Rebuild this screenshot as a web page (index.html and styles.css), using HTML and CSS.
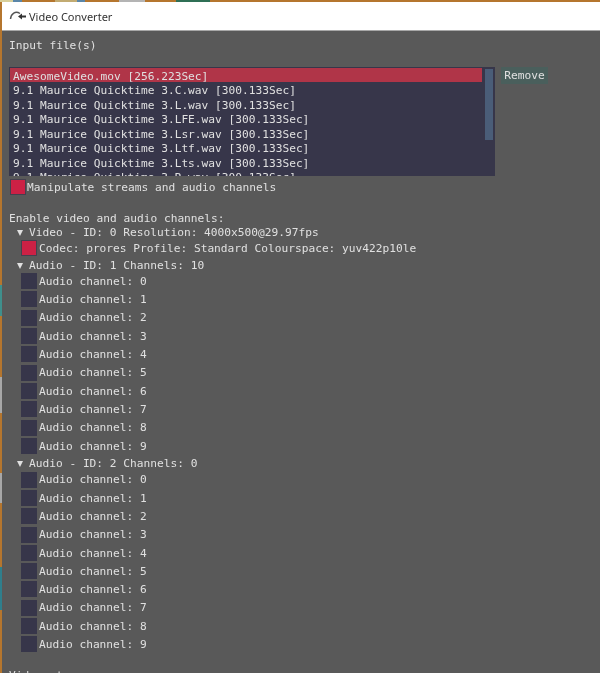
FILE: index.html
```html
<!DOCTYPE html>
<html lang="en">

<head>
    <meta charset="UTF-8">
    <title>Video Converter</title>
    <link rel="stylesheet" href="styles.css">
</head>

<body>
    <div class="window">
        <div class="titlebar">
            <svg class="app-icon" width="17" height="12" viewBox="0 0 17 12">
                <path d="M1.5 9 C2 3.5 6.5 0.5 11 3.5" fill="none" stroke="#555" stroke-width="1.5"></path>
                <path d="M9 6.5 L13 3.5 L13 5.5 L17 5.5 L17 7.5 L13 7.5 L13 9.5 Z" fill="#333"></path>
            </svg>
            <span>Video Converter</span>
        </div>

        <div class="content">
            <div class="line">Input file(s)</div>

            <div class="file-section">
                <div class="file-list">
                    <div class="file-rows">
                        <div class="file selected">AwesomeVideo.mov [256.223Sec]</div>
                        <div class="file">9.1 Maurice Quicktime 3.C.wav [300.133Sec]</div>
                        <div class="file">9.1 Maurice Quicktime 3.L.wav [300.133Sec]</div>
                        <div class="file">9.1 Maurice Quicktime 3.LFE.wav [300.133Sec]</div>
                        <div class="file">9.1 Maurice Quicktime 3.Lsr.wav [300.133Sec]</div>
                        <div class="file">9.1 Maurice Quicktime 3.Ltf.wav [300.133Sec]</div>
                        <div class="file">9.1 Maurice Quicktime 3.Lts.wav [300.133Sec]</div>
                        <div class="file">9.1 Maurice Quicktime 3.R.wav [300.133Sec]</div>
                    </div>
                    <div class="scrollbar"><div class="scroll-thumb"></div></div>
                </div>
                <button class="remove" type="button">Remove</button>
            </div>

            <div class="check-row manipulate">
                <span class="box on"></span>
                <span class="label">Manipulate streams and audio channels</span>
            </div>

            <div class="line enable">Enable video and audio channels:</div>

            <div class="line tree"><span class="arrow"></span>Video - ID: 0 Resolution: 4000x500@29.97fps</div>
            <div class="check-row codec">
                <span class="box on"></span>
                <span class="label">Codec: prores Profile: Standard Colourspace: yuv422p10le</span>
            </div>

            <div class="line tree audio"><span class="arrow"></span>Audio - ID: 1 Channels: 10</div>
            <div class="check-row channel"><span class="box"></span><span class="label">Audio channel: 0</span></div>
            <div class="check-row channel"><span class="box"></span><span class="label">Audio channel: 1</span></div>
            <div class="check-row channel"><span class="box"></span><span class="label">Audio channel: 2</span></div>
            <div class="check-row channel"><span class="box"></span><span class="label">Audio channel: 3</span></div>
            <div class="check-row channel"><span class="box"></span><span class="label">Audio channel: 4</span></div>
            <div class="check-row channel"><span class="box"></span><span class="label">Audio channel: 5</span></div>
            <div class="check-row channel"><span class="box"></span><span class="label">Audio channel: 6</span></div>
            <div class="check-row channel"><span class="box"></span><span class="label">Audio channel: 7</span></div>
            <div class="check-row channel"><span class="box"></span><span class="label">Audio channel: 8</span></div>
            <div class="check-row channel"><span class="box"></span><span class="label">Audio channel: 9</span></div>

            <div class="line tree audio"><span class="arrow"></span>Audio - ID: 2 Channels: 0</div>
            <div class="check-row channel"><span class="box"></span><span class="label">Audio channel: 0</span></div>
            <div class="check-row channel"><span class="box"></span><span class="label">Audio channel: 1</span></div>
            <div class="check-row channel"><span class="box"></span><span class="label">Audio channel: 2</span></div>
            <div class="check-row channel"><span class="box"></span><span class="label">Audio channel: 3</span></div>
            <div class="check-row channel"><span class="box"></span><span class="label">Audio channel: 4</span></div>
            <div class="check-row channel"><span class="box"></span><span class="label">Audio channel: 5</span></div>
            <div class="check-row channel"><span class="box"></span><span class="label">Audio channel: 6</span></div>
            <div class="check-row channel"><span class="box"></span><span class="label">Audio channel: 7</span></div>
            <div class="check-row channel"><span class="box"></span><span class="label">Audio channel: 8</span></div>
            <div class="check-row channel"><span class="box"></span><span class="label">Audio channel: 9</span></div>

            <div class="line streams">Video streams:</div>
        </div>
    </div>
</body>

</html>
```

FILE: styles.css
```css
html,
body {
    margin: 0;
    height: 100%;
    overflow: hidden;
}

/* desktop showing behind the window, a thin strip on top and on the left */
body {
    padding: 2px 0 0 2px;
    box-sizing: border-box;
    background-color: #b5762e;
    background-image:
        linear-gradient(90deg, #d8cf9a 0 13px, #5a86a8 13px 22px, #b5762e 22px 55px, #c2ab72 55px 77px, #5a86a8 77px 85px, #b5762e 85px 119px, #b4b4b4 119px 145px, #b5762e 145px 176px, #2f6f55 176px 210px, #b5762e 210px),
        linear-gradient(#b5762e 0 285px, #3f8f8c 285px 316px, #b5762e 316px 377px, #a8a8a8 377px 413px, #b5762e 413px 473px, #a8a8a8 473px 503px, #b5762e 503px 567px, #2f7f8c 567px 610px, #b5762e 610px);
    background-size: 100% 2px, 2px 100%;
    background-repeat: no-repeat;
}

.window {
    height: 100%;
    display: flex;
    flex-direction: column;
    background-color: #595959;
    filter: blur(0.35px);
}

.titlebar {
    height: 29px;
    flex-shrink: 0;
    box-sizing: border-box;
    display: flex;
    align-items: center;
    gap: 3px;
    padding-left: 7px;
    background-color: #fff;
    border-bottom: 1px solid #a8a8a8;
    font-family: "Noto Sans", sans-serif;
    font-size: 11px;
    color: #333;
}

.app-icon {
    flex-shrink: 0;
}

.content {
    flex: 1;
    overflow: hidden;
    padding: 7px 0 0 7px;
    font-family: "DejaVu Sans Mono", monospace;
    font-size: 11.2px;
    line-height: 16.5px;
    color: #e0e0e0;
    white-space: nowrap;
}

.line {
    height: 14.5px;
}

.file-section {
    display: flex;
    align-items: flex-start;
    gap: 6px;
    margin-top: 14px;
}

.file-list {
    width: 486px;
    height: 109px;
    box-sizing: border-box;
    display: flex;
    justify-content: space-between;
    overflow: hidden;
    padding: 1px;
    background-color: #37364a;
}

.file-rows {
    width: 472px;
}

.file {
    height: 14.5px;
    padding-left: 3px;
    line-height: 18.5px;
}

.file.selected {
    background-color: #b03548;
}

.scrollbar {
    width: 8px;
    margin-right: 1px;
    background-color: #37364a;
}

.scroll-thumb {
    width: 100%;
    height: 71px;
    margin-top: 1px;
    background-color: #4a5d78;
}

.remove {
    height: 17px;
    width: 47px;
    padding: 1px 0 0;
    border: none;
    background-color: #4a5f5c;
    color: #e0e0e0;
    font: inherit;
    line-height: 16px;
}

.check-row {
    display: flex;
    align-items: center;
    gap: 2px;
}

.label {
    padding-top: 2px;
    line-height: 14.5px;
}

.box {
    width: 16px;
    height: 16px;
    flex-shrink: 0;
    box-sizing: border-box;
    background-color: #37364a;
}

.box.on {
    border: 1px solid #45404f;
    background-color: #cc2145;
}

.manipulate {
    height: 17px;
    margin-top: 3px;
    margin-left: 1px;
    gap: 1px;
}

.enable {
    margin-top: 15px;
}

.tree {
    display: flex;
    align-items: flex-start;
    padding-left: 7px;
}

.arrow {
    width: 0;
    height: 0;
    margin: 5px 6px 0 1px;
    border-left: 3.5px solid transparent;
    border-right: 3.5px solid transparent;
    border-top: 6px solid #e0e0e0;
}

.codec {
    height: 17px;
    padding-left: 12px;
}

.audio {
    margin-top: 1px;
}

.channel {
    height: 18.3px;
    padding-left: 12px;
}

.streams {
    margin-top: 15px;
}
```
